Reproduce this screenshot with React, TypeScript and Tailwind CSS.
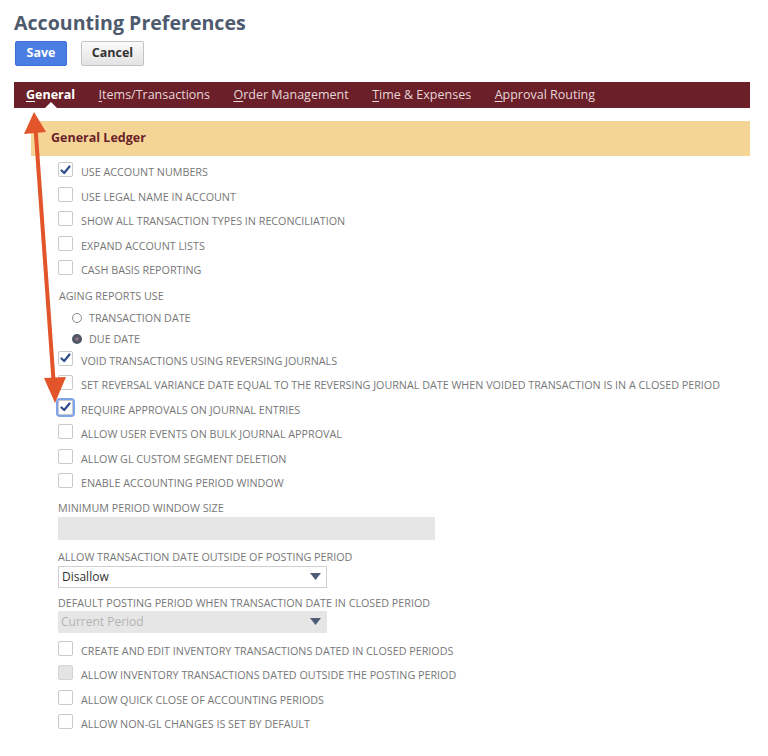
import React from "react";

type Row =
  | { kind: "check"; label: string; checked?: boolean; disabled?: boolean; focus?: boolean }
  | { kind: "label"; label: string }
  | { kind: "radio"; label: string; checked?: boolean };

const tabs = [
  { first: "G", rest: "eneral", active: true },
  { first: "I", rest: "tems/Transactions" },
  { first: "O", rest: "rder Management" },
  { first: "T", rest: "ime & Expenses" },
  { first: "A", rest: "pproval Routing" },
];

const topRows: Row[] = [
  { kind: "check", label: "USE ACCOUNT NUMBERS", checked: true },
  { kind: "check", label: "USE LEGAL NAME IN ACCOUNT" },
  { kind: "check", label: "SHOW ALL TRANSACTION TYPES IN RECONCILIATION" },
  { kind: "check", label: "EXPAND ACCOUNT LISTS" },
  { kind: "check", label: "CASH BASIS REPORTING" },
  { kind: "label", label: "AGING REPORTS USE" },
  { kind: "radio", label: "TRANSACTION DATE" },
  { kind: "radio", label: "DUE DATE", checked: true },
  { kind: "check", label: "VOID TRANSACTIONS USING REVERSING JOURNALS", checked: true },
  {
    kind: "check",
    label: "SET REVERSAL VARIANCE DATE EQUAL TO THE REVERSING JOURNAL DATE WHEN VOIDED TRANSACTION IS IN A CLOSED PERIOD",
  },
  { kind: "check", label: "REQUIRE APPROVALS ON JOURNAL ENTRIES", checked: true, focus: true },
  { kind: "check", label: "ALLOW USER EVENTS ON BULK JOURNAL APPROVAL" },
  { kind: "check", label: "ALLOW GL CUSTOM SEGMENT DELETION" },
  { kind: "check", label: "ENABLE ACCOUNTING PERIOD WINDOW" },
];

const bottomRows: Row[] = [
  { kind: "check", label: "CREATE AND EDIT INVENTORY TRANSACTIONS DATED IN CLOSED PERIODS" },
  { kind: "check", label: "ALLOW INVENTORY TRANSACTIONS DATED OUTSIDE THE POSTING PERIOD", disabled: true },
  { kind: "check", label: "ALLOW QUICK CLOSE OF ACCOUNTING PERIODS" },
  { kind: "check", label: "ALLOW NON-GL CHANGES IS SET BY DEFAULT" },
];

function Checkbox({ checked, disabled, focus }: { checked?: boolean; disabled?: boolean; focus?: boolean }) {
  return (
    <span
      className={
        "relative flex h-[15px] w-[15px] shrink-0 items-center justify-center rounded-[2px] border " +
        (disabled ? "border-[#d4d4d4] bg-[#e4e4e4]" : "border-[#c9c9c9] bg-white") +
        (focus ? " outline outline-2 outline-offset-0 outline-[#7fa3ea]" : "")
      }
    >
      {checked && (
        <svg width="11" height="10" viewBox="0 0 11 10">
          <path d="M1.5 5.5 L4.2 8 L9.5 1.5" fill="none" stroke="#2f4d8c" strokeWidth="2.2" strokeLinecap="round" strokeLinejoin="round" />
        </svg>
      )}
    </span>
  );
}

function Radio({ checked }: { checked?: boolean }) {
  return checked ? (
    <span className="flex h-[10px] w-[10px] items-center justify-center rounded-full bg-[#4f5766]">
      <span className="h-[4px] w-[4px] rounded-full bg-[#8a6f7f]" />
    </span>
  ) : (
    <span className="h-[10px] w-[10px] rounded-full border border-[#8a8a8a] bg-white" />
  );
}

function Rows({ rows }: { rows: Row[] }) {
  return (
    <div className="flex flex-col">
      {rows.map((r, i) => {
        if (r.kind === "label") {
          return (
            <div key={i} className="flex h-[24px] items-center pl-px pt-[2px] text-[10.75px] text-[#777]">
              {r.label}
            </div>
          );
        }
        if (r.kind === "radio") {
          return (
            <div key={i} className="flex h-[21px] items-center gap-[7px] pl-[14px]">
              <Radio checked={r.checked} />
              <span className="text-[10.75px] text-[#777]">{r.label}</span>
            </div>
          );
        }
        return (
          <div key={i} className="flex h-[24.5px] items-start gap-[8px] pt-[1px]">
            <Checkbox checked={r.checked} disabled={r.disabled} focus={r.focus} />
            <span className="pt-[3px] text-[10.75px] leading-[14px] whitespace-nowrap text-[#777]">{r.label}</span>
          </div>
        );
      })}
    </div>
  );
}

function Caret() {
  return (
    <svg width="11" height="7" viewBox="0 0 11 7">
      <path d="M0 0 H11 L5.5 7 Z" fill="#4e5d78" />
    </svg>
  );
}

export default function App() {
  return (
    <div className="relative min-h-[756px] w-[768px] bg-white font-['Open_Sans',sans-serif]">
      <div className="flex flex-col pl-[14px] pr-[18px] pt-[9px]">
        <h1 className="text-[19.6px] font-bold leading-[28px] text-[#4e5a6e]">Accounting Preferences</h1>
        <div className="mt-[4px] flex gap-[14px] pl-px">
          <button className="h-[25px] w-[52px] rounded-[2px] border border-[#3c6fd6] bg-[#4a7ee2] text-[12.5px] font-bold text-white">
            Save
          </button>
          <button className="h-[25px] w-[63px] rounded-[2px] border border-[#c3c3c3] bg-gradient-to-b from-[#fafafa] to-[#e3e3e3] text-[12.5px] font-bold text-[#333]">
            Cancel
          </button>
        </div>

        <div className="relative mt-[16px] flex h-[26px] items-center gap-[23.5px] bg-[#6a1f29] pl-[12px]">
          {tabs.map((t) => (
            <span
              key={t.first + t.rest}
              className={"text-[12.5px] " + (t.active ? "font-bold text-white" : "text-[#e7d6d8]")}
            >
              <span className="underline underline-offset-2">{t.first}</span>
              {t.rest}
            </span>
          ))}
          <span className="absolute bottom-0 left-[31px] h-0 w-0 border-x-[6px] border-b-[6px] border-x-transparent border-b-white" />
        </div>

        <div className="mt-[13px] ml-[17px] flex h-[35px] items-center bg-[#f5d596] pl-[20px] text-[12.5px] font-bold text-[#6a1f29]">
          General Ledger
        </div>

        <div className="flex flex-col pl-[44px] pt-[5px]">
          <Rows rows={topRows} />

          <div className="mt-[4px] text-[10.75px] leading-[14px] text-[#777]">MINIMUM PERIOD WINDOW SIZE</div>
          <div className="mt-[2px] h-[23px] w-[377px] bg-[#e6e6e6]" />

          <div className="mt-[10px] text-[10.75px] leading-[14px] text-[#777]">ALLOW TRANSACTION DATE OUTSIDE OF POSTING PERIOD</div>
          <div className="mt-[2px] flex h-[22px] w-[269px] items-center justify-between border border-[#cfcfcf] bg-white pl-[3px] pr-[5px]">
            <span className="text-[12px] text-[#333]">Disallow</span>
            <Caret />
          </div>

          <div className="mt-[8px] text-[10.75px] leading-[14px] text-[#777]">DEFAULT POSTING PERIOD WHEN TRANSACTION DATE IN CLOSED PERIOD</div>
          <div className="mt-[1px] flex h-[22px] w-[269px] items-center justify-between bg-[#e6e6e6] pl-[3px] pr-[6px]">
            <span className="text-[12px] text-[#b3b3b3]">Current Period</span>
            <Caret />
          </div>

          <div className="mt-[7px]">
            <Rows rows={bottomRows} />
          </div>
        </div>
      </div>

      <svg className="pointer-events-none absolute left-0 top-0" width="768" height="756" viewBox="0 0 768 756">
        <line x1="35.5" y1="128" x2="53.5" y2="380" stroke="#e2552b" strokeWidth="4" />
        <path d="M34 112 L24 134 L46 132 Z" fill="#e2552b" />
        <path d="M55 403 L44 378 L66 377 Z" fill="#e2552b" />
      </svg>
    </div>
  );
}
